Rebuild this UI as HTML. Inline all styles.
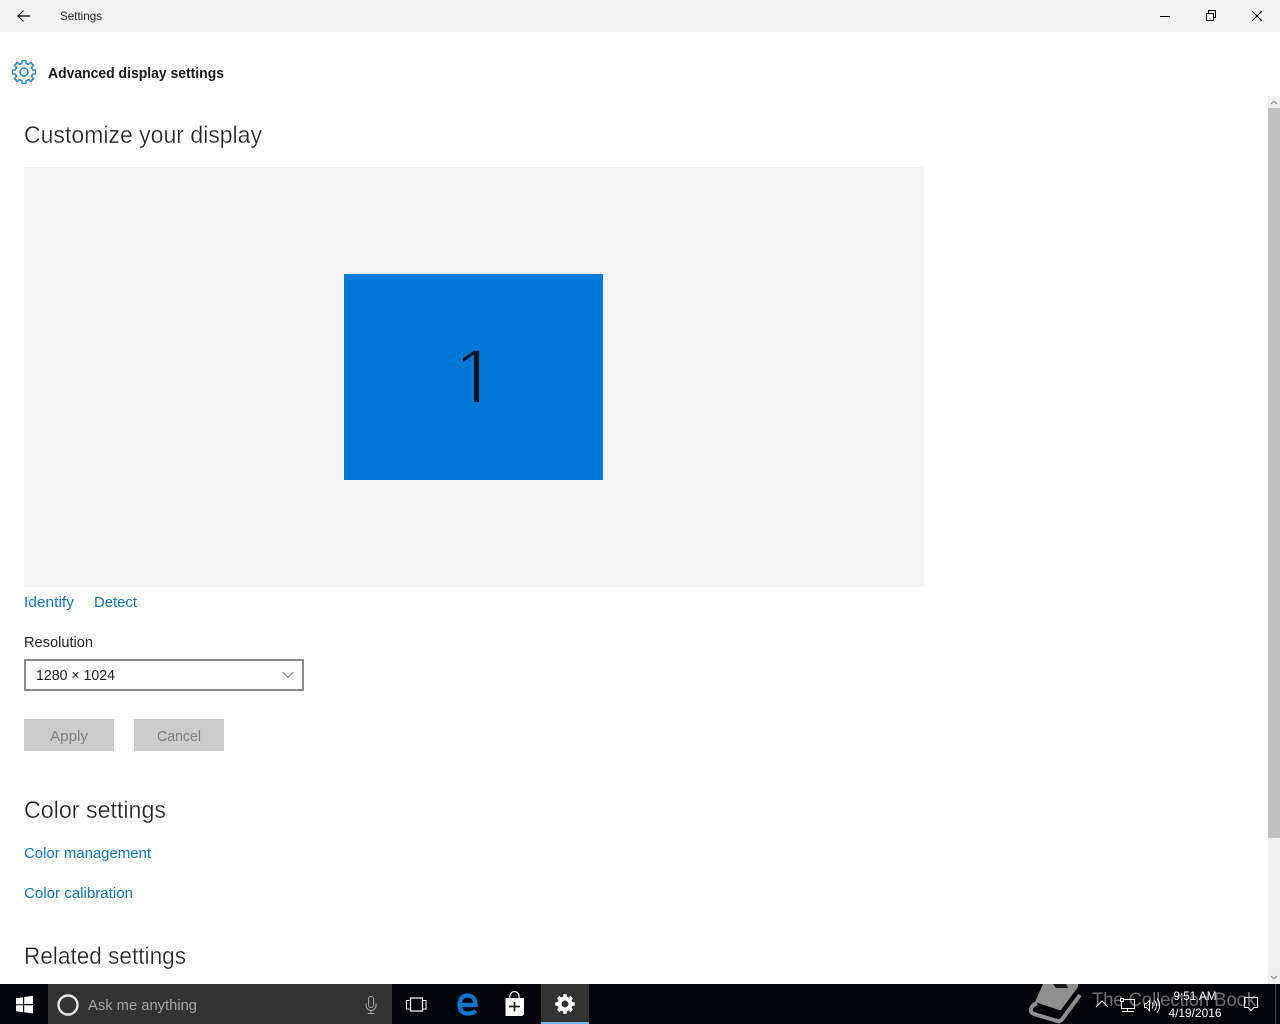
<!DOCTYPE html>
<html lang="en"><head><meta charset="utf-8"><title>Settings</title>
<style>
html,body{margin:0;padding:0;background:#fff;width:1280px;height:1024px;overflow:hidden}
svg{display:block;font-family:"Liberation Sans",sans-serif}
.h{stroke:#fff;stroke-width:.35px;paint-order:fill stroke}
</style></head><body>
<svg width="1280" height="1024" viewBox="0 0 1280 1024" xmlns="http://www.w3.org/2000/svg">
<defs>
<clipPath id="one"><rect x="463" y="330" width="40" height="72"/></clipPath>
<path id="gear" d="M8.54-2.13L11.33-2V2L8.54 2.13 7.54 4.53 9.42 6.6 6.6 9.42 4.53 7.54 2.13 8.54 2 11.33H-2L-2.13 8.54-4.53 7.54-6.6 9.42-9.42 6.6-7.54 4.530-8.54 2.13-11.33 2V-2L-8.54-2.13-7.54-4.53-9.42-6.6-6.6-9.42-4.53-7.54-2.13-8.54-2-11.33H2L2.13-8.54 4.53-7.54 6.6-9.42 9.42-6.6 7.54-4.53Z"/>
</defs>
<rect width="1280" height="1024" fill="#fff"/>
<!-- title bar -->
<rect width="1280" height="32" fill="#f2f2f2"/>
<path d="M30 16H18.5M23.5 10.5L18 16l5.500 5.500" fill="none" stroke="#000" stroke-width="1.200"/>
<text x="60" y="20" font-size="12" fill="#222" textLength="42" lengthAdjust="spacingAndGlyphs">Settings</text>
<path d="M1160 16.500h10" stroke="#000" stroke-width="1"/>
<path d="M1206.500 13.500h7v7h-7zM1208.500 13v-2.500h7v7H1214" fill="none" stroke="#000" stroke-width="1"/>
<path d="M1252 11l10 10M1262 11l-10 10" stroke="#000" stroke-width="1.100"/>
<!-- header -->
<g transform="translate(24 72)" fill="none" stroke="#2b86d3" stroke-width="1.500" stroke-linejoin="round">
<circle r="4"/>
<use href="#gear"/>
</g>
<text x="48" y="78" font-size="15" font-weight="bold" fill="#1a1a1a" textLength="176" lengthAdjust="spacingAndGlyphs">Advanced display settings</text>
<text class="h" x="24" y="143" font-size="24" fill="#222" textLength="238" lengthAdjust="spacingAndGlyphs">Customize your display</text>
<!-- display preview -->
<rect x="24" y="167" width="900" height="420" fill="#f3f3f3"/>
<rect x="344" y="274" width="259" height="206" fill="#0078d7"/>
<g clip-path="url(#one)">
<text x="475" y="409" font-size="86" text-anchor="middle" fill="#0a1420" stroke="#0078d7" stroke-width="2.600" paint-order="fill stroke">1</text>
</g>
<!-- links -->
<g font-size="15" fill="#0f73c4">
<text x="24" y="607" textLength="50" lengthAdjust="spacingAndGlyphs">Identify</text>
<text x="94" y="607" textLength="43" lengthAdjust="spacingAndGlyphs">Detect</text>
<text x="24" y="858" textLength="127" lengthAdjust="spacingAndGlyphs">Color management</text>
<text x="24" y="898" textLength="109" lengthAdjust="spacingAndGlyphs">Color calibration</text>
</g>
<text x="24" y="647" font-size="15" fill="#222" textLength="69" lengthAdjust="spacingAndGlyphs">Resolution</text>
<rect x="25" y="660" width="278" height="30" fill="#fff" stroke="#8a8a8a" stroke-width="2"/>
<text x="36" y="680" font-size="15" fill="#222" textLength="79" lengthAdjust="spacingAndGlyphs">1280 × 1024</text>
<path d="M282.500 672l5.500 5.500 5.500-5.500" fill="none" stroke="#777" stroke-width="1"/>
<rect x="24" y="719" width="90" height="32" fill="#cccccc"/>
<rect x="134" y="719" width="90" height="32" fill="#cccccc"/>
<text x="50" y="741" font-size="15" fill="#808080" textLength="38" lengthAdjust="spacingAndGlyphs">Apply</text>
<text x="157" y="741" font-size="15" fill="#808080" textLength="44" lengthAdjust="spacingAndGlyphs">Cancel</text>
<text class="h" x="24" y="818" font-size="24" fill="#222" textLength="142" lengthAdjust="spacingAndGlyphs">Color settings</text>
<text class="h" x="24" y="964" font-size="24" fill="#222" textLength="162" lengthAdjust="spacingAndGlyphs">Related settings</text>
<!-- scrollbar -->
<rect x="1268" y="96" width="12" height="888" fill="#f0f0f0"/>
<rect x="1268" y="108" width="12" height="730" fill="#c2c2c2"/>
<path d="M1271 104l3-3 3 3M1271 976l3 3 3-3" fill="none" stroke="#888" stroke-width="1"/>
<!-- taskbar -->
<rect y="984" width="1280" height="40" fill="#03040a"/>
<path d="M16 998.200l7-1v7h-7zM24.200 997l8.800-1.300v8.300h-8.800zM16 1005.200h7v7l-7-1zM24.200 1005.200H33v8.300l-8.800-1.300z" fill="#fff"/>
<rect x="48" y="984" width="344" height="40" fill="#333333"/>
<circle cx="68" cy="1005" r="9.500" fill="none" stroke="#e6e6e6" stroke-width="2.400"/>
<text x="88" y="1010" font-size="15" fill="#a6a6a6" textLength="109" lengthAdjust="spacingAndGlyphs">Ask me anything</text>
<g fill="none" stroke="#a6a6a6" stroke-width="1">
<rect x="368.500" y="996.500" width="5" height="11" rx="2.500"/>
<path d="M366 1003.500v2a5 5 0 0 0 10 0v-2M371 1010.500v3M367.500 1013.500h7"/>
</g>
<!-- task view -->
<path d="M409.500 1000.500h-3v8.500h3M423 1000.500h3v8.500h-3" fill="none" stroke="#fff" stroke-width="1"/>
<rect x="410.500" y="998" width="12" height="13" fill="none" stroke="#fff" stroke-width="1.200"/>
<!-- edge -->
<path d="M459.500 1005H475.500C475.500 998.500 472 995.500 467.500 995.500C462 995.500 459.500 1000 459.500 1005C459.500 1010.500 463 1013.500 468 1013.500C471 1013.500 474 1012.500 476 1011" fill="none" stroke="#0a78d2" stroke-width="4.300"/>
<!-- store -->
<path d="M505.500 998H524v16.500l-2 1.500h-16.500z" fill="#fff"/>
<path d="M510 998v-2a4.500 4.500 0 0 1 9 0v2" fill="none" stroke="#fff" stroke-width="1.300"/>
<path d="M509 1006.500h11M514.500 1002v9.500" stroke="#222" stroke-width="1.700" fill="none"/>
<!-- settings active -->
<rect x="541" y="984" width="48" height="40" fill="#333333"/>
<rect x="541" y="1022" width="48" height="2" fill="#76b9ed"/>
<g transform="translate(565 1004) scale(.86)">
<use href="#gear" fill="#fff"/>
<circle r="4" fill="#333333"/>
</g>
<!-- watermark -->
<path d="M1043 984H1078V987L1061 1010H1059L1035 1002Z" fill="#8f8f8f"/>
<path d="M1053 984H1066L1068 988H1056Z" fill="#1a1a1a"/>
<path d="M1037 1003C1030 1006 1029 1012 1034 1014L1059 1021.500L1062 1019.500L1080 995" fill="none" stroke="#8f8f8f" stroke-width="4"/>
<text x="1092" y="1006" font-size="19" fill="#6f6f6f" textLength="164" lengthAdjust="spacingAndGlyphs">The Collection Book</text>
<!-- tray -->
<path d="M1096 1007l6-6 6 6" fill="none" stroke="#fff" stroke-width="1"/>
<g fill="none" stroke="#fff" stroke-width="1">
<rect x="1121.500" y="999.500" width="13" height="9"/>
<rect x="1120.500" y="998.500" width="3" height="3" fill="#03040a"/>
<path d="M1127.500 1008.500v2.500M1122 1011.500h12"/>
<path d="M1144.500 1003.500h2l3-3v10l-3-3h-2zM1152 1002.500c1.300 1.500 1.300 4.500 0 6M1154.500 1000.500c2.500 2.500 2.500 7.500 0 10M1157 998.500c3.500 4 3.500 10 0 14"/>
<path d="M1244.500 997.500h13v10h-3.500l-3 3-3-3h-3.500z"/>
</g>
<text x="1195" y="1000" font-size="12" fill="#fff" text-anchor="middle" textLength="43" lengthAdjust="spacingAndGlyphs">9:51 AM</text>
<text x="1195" y="1017" font-size="12" fill="#fff" text-anchor="middle" textLength="53" lengthAdjust="spacingAndGlyphs">4/19/2016</text>
<rect x="1275" y="984" width="1" height="40" fill="#444"/>
</svg>
</body></html>
